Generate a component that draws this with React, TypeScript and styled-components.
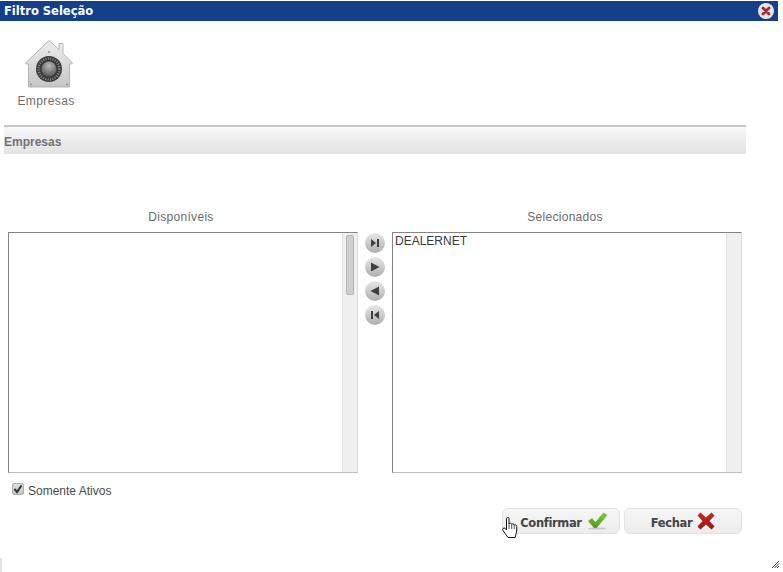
import styled, { createGlobalStyle } from "styled-components";

const GlobalStyle = createGlobalStyle`
  html, body {
    margin: 0;
    padding: 0;
    background: #fff;
    overflow: hidden;
  }
  body {
    font-family: "Liberation Sans", Arial, sans-serif;
  }
`;

const Page = styled.div`
  position: relative;
  width: 783px;
  height: 572px;
  background: #fff;
  overflow: hidden;
`;

const Dialog = styled.div`
  width: 778px;
  padding-top: 1px;
  display: flex;
  flex-direction: column;
`;

const TitleBar = styled.header`
  height: 20px;
  background: #143f8a;
  display: flex;
  align-items: center;
  justify-content: space-between;
  padding: 0 4px 0 4px;
`;

const Title = styled.h1`
  margin: 0;
  font-family: "DejaVu Sans", Verdana, sans-serif;
  font-size: 11.5px;
  font-weight: 700;
  color: #fff;
`;

const Toolbar = styled.div`
  height: 104px;
  padding-top: 19px;
  padding-left: 17px;
  box-sizing: border-box;
`;

const ToolItem = styled.div`
  width: 58px;
  display: flex;
  flex-direction: column;
  align-items: center;
  gap: 6px;
  font-size: 12px;
  letter-spacing: 0.4px;
  color: #6f6f6f;
`;

const ToolIcon = styled.svg`
  margin-left: 5px;
`;

const SectionHeader = styled.div`
  width: 742px;
  margin-left: 4px;
  height: 29px;
  box-sizing: border-box;
  padding-top: 2px;
  border-top: 2px solid #c4c4c4;
  background: linear-gradient(#f8f8f8, #e2e2e2);
  font-size: 12px;
  font-weight: 700;
  color: #727272;
  display: flex;
  align-items: center;
`;

const Picker = styled.div`
  margin-top: 56px;
  padding-left: 8px;
  display: grid;
  grid-template-columns: 350px 34px 350px;
  row-gap: 8px;
`;

const ColumnLabel = styled.div<{ $column: number }>`
  grid-column: ${({ $column }) => $column};
  grid-row: 1;
  padding-right: 4px;
  text-align: center;
  font-size: 12px;
  line-height: 14px;
  color: #6b6b6b;
  letter-spacing: 0.3px;
`;

const ListBox = styled.div<{ $column: number }>`
  grid-column: ${({ $column }) => $column};
  grid-row: 2;
  height: 241px;
  box-sizing: border-box;
  border: 1px solid #858585;
  border-right-color: #dcdcdc;
  border-bottom-color: #bcbcbc;
  display: flex;
  justify-content: space-between;
`;

const ListItems = styled.div`
  padding: 1px 2px;
  font-size: 12px;
  line-height: 14px;
  color: #3a3a3a;
`;

const ScrollTrack = styled.div`
  width: 15px;
  background: #f0f0f0;
  border-left: 1px solid #e2e2e2;
  padding: 2px 3px;
  box-sizing: border-box;
`;

const ScrollThumb = styled.div`
  height: 60px;
  box-sizing: border-box;
  background: #cfcfcf;
  border: 1px solid #b4b4b4;
  border-radius: 2px;
`;

const MoveButtons = styled.div`
  grid-column: 2;
  grid-row: 2;
  display: flex;
  flex-direction: column;
  align-items: center;
  gap: 4px;
  padding-top: 1px;
`;

const MoveButton = styled.button`
  width: 20px;
  height: 20px;
  padding: 0;
  border: 0;
  border-radius: 50%;
  background: linear-gradient(#e6e6e6, #cfcfcf 45%, #acacac);
  display: flex;
  align-items: center;
  justify-content: center;
`;

const ActiveOnly = styled.label`
  margin: 9px 0 0 12px;
  display: flex;
  align-items: flex-start;
  gap: 4px;
  font-size: 12px;
  line-height: 18px;
  color: #4a4a4a;
  height: 18px;
`;

const CheckMark = styled.span`
  width: 12px;
  height: 12px;
  margin-top: 1px;
  box-sizing: border-box;
  border: 1px solid #b0b0b0;
  border-radius: 2px;
  background: linear-gradient(#dedede, #c4c4c4);
  display: flex;
  align-items: center;
  justify-content: center;
`;

const Actions = styled.div`
  margin-top: 8px;
  width: 742px;
  display: flex;
  justify-content: flex-end;
  gap: 4px;
`;

const ActionButton = styled.button<{ $offset?: number }>`
  position: relative;
  width: 118px;
  height: 26px;
  padding: 0 0 0 ${({ $offset }) => $offset ?? 0}px;
  border: 1px solid #e2e2e2;
  border-radius: 6px;
  background: linear-gradient(#f6f6f6, #ececec);
  display: flex;
  align-items: center;
  justify-content: center;
  gap: 5px;
  font-family: "DejaVu Sans", Verdana, sans-serif;
  font-size: 11.5px;
  letter-spacing: -0.35px;
  font-weight: 700;
  color: #444;
`;

const ActionLabel = styled.span`
  padding-top: 3px;
`;

const HandCursor = styled.svg`
  position: absolute;
  left: -1px;
  top: 8px;
`;

const ResizeGrip = styled.svg`
  position: absolute;
  right: 3px;
  bottom: 3px;
`;

const LeftEdge = styled.div`
  position: absolute;
  left: 0;
  bottom: 0;
  width: 2px;
  height: 14px;
  background: #e4e4e4;
`;

const CloseIcon = () => (
  <svg width="16" height="16" viewBox="0 0 16 16">
    <circle cx="8" cy="8" r="8" fill="#e6e6ea" />
    <path d="M5 5 L11 11 M11 5 L5 11" stroke="#a5282c" strokeWidth="2.8" strokeLinecap="round" />
  </svg>
);

const VaultIcon = () => (
  <ToolIcon width="48" height="48" viewBox="0 0 48 48">
    <defs>
      <linearGradient id="house" x1="0" y1="0" x2="0" y2="1">
        <stop offset="0" stopColor="#ededed" />
        <stop offset="1" stopColor="#c6c6c6" />
      </linearGradient>
      <radialGradient id="knob" cx="0.5" cy="0.3" r="0.7">
        <stop offset="0" stopColor="#b8b8b8" />
        <stop offset="1" stopColor="#5a5a5a" />
      </radialGradient>
    </defs>
    <path
      d="M24 0.5 L34 9.5 V3.5 H38 V13.5 L47.5 23 L46.5 24 H44.5 V47 H3.5 V24 H1.5 L0.5 23 Z"
      fill="url(#house)"
      stroke="#a6a6a6"
      strokeWidth="0.8"
    />
    <circle cx="24" cy="29" r="13" fill="#3a3a3a" />
    <circle cx="24" cy="29" r="10.5" fill="none" stroke="#8c8c8c" strokeWidth="2.4" strokeDasharray="1 1.4" />
    <circle cx="24" cy="29" r="7.5" fill="url(#knob)" />
    <circle cx="24" cy="12" r="1" fill="#9a9a9a" />
    <circle cx="6" cy="44.5" r="0.9" fill="#8a8a8a" />
    <circle cx="42" cy="44.5" r="0.9" fill="#8a8a8a" />
  </ToolIcon>
);

const MoveGlyph = ({ kind }: { kind: "last" | "next" | "prev" | "first" }) => {
  const paths = {
    last: "M2 2 L7 6 L2 10 Z M8 2 H10 V10 H8 Z",
    next: "M2 1.5 L10.5 6 L2 10.5 Z",
    prev: "M10 1.5 L1.5 6 L10 10.5 Z",
    first: "M10 2 L5 6 L10 10 Z M2 2 H4 V10 H2 Z",
  };
  return (
    <svg width="12" height="12" viewBox="0 0 12 12">
      <path d={paths[kind]} fill="#3f3f3f" />
    </svg>
  );
};

const CheckIcon = () => (
  <svg width="21" height="18" viewBox="0 0 21 18">
    <defs>
      <linearGradient id="tick" x1="0" y1="0" x2="0" y2="1">
        <stop offset="0" stopColor="#8cc63f" />
        <stop offset="1" stopColor="#4f9a1e" />
      </linearGradient>
    </defs>
    <ellipse cx="10" cy="16.5" rx="9" ry="1" fill="#c8c8c8" />
    <path d="M1 9 L5 6 L8.5 10 L16.5 0.5 L20.5 3 L9.5 16 H7 Z" fill="url(#tick)" />
  </svg>
);

const CrossIcon = () => (
  <svg width="18" height="18" viewBox="0 0 18 18">
    <defs>
      <linearGradient id="cross" x1="0" y1="0" x2="0" y2="1">
        <stop offset="0" stopColor="#c22a22" />
        <stop offset="1" stopColor="#931a16" />
      </linearGradient>
    </defs>
    <path
      d="M0.5 3.5 L3.5 0.5 L9 5.5 L14.5 0.5 L17.5 3.5 L12.5 9 L17.5 14.5 L14.5 17.5 L9 12.5 L3.5 17.5 L0.5 14.5 L5.5 9 Z"
      fill="url(#cross)"
    />
  </svg>
);

const Hand = () => (
  <HandCursor width="16" height="21" viewBox="0 0 16 21">
    <path
      d="M4.5 1.5 C4.5 0.2 7 0.2 7 1.5 V7 C7.5 5.8 9.5 5.8 9.7 7.5 C10.2 6.5 12 6.5 12.2 8.2 C12.8 7.5 14.7 7.7 14.7 9.5 V14 L13.2 20.5 H6 L1 13.5 C0 11.8 1.8 10.3 3 11.3 L4.5 13 Z"
      fill="#fff"
      stroke="#111"
      strokeWidth="1"
    />
    <path d="M7 7 V12 M9.7 7.5 V12 M12.2 8.2 V12" stroke="#111" strokeWidth="0.7" />
  </HandCursor>
);

export default function App() {
  return (
    <Page>
      <GlobalStyle />
      <Dialog>
        <TitleBar>
          <Title>Filtro Seleção</Title>
          <CloseIcon />
        </TitleBar>
        <Toolbar>
          <ToolItem>
            <VaultIcon />
            Empresas
          </ToolItem>
        </Toolbar>
        <SectionHeader>Empresas</SectionHeader>
        <Picker>
          <ColumnLabel $column={1}>Disponíveis</ColumnLabel>
          <ColumnLabel $column={3}>Selecionados</ColumnLabel>
          <ListBox $column={1}>
            <ListItems />
            <ScrollTrack>
              <ScrollThumb />
            </ScrollTrack>
          </ListBox>
          <MoveButtons>
            <MoveButton><MoveGlyph kind="last" /></MoveButton>
            <MoveButton><MoveGlyph kind="next" /></MoveButton>
            <MoveButton><MoveGlyph kind="prev" /></MoveButton>
            <MoveButton><MoveGlyph kind="first" /></MoveButton>
          </MoveButtons>
          <ListBox $column={3}>
            <ListItems>DEALERNET</ListItems>
            <ScrollTrack />
          </ListBox>
        </Picker>
        <ActiveOnly>
          <CheckMark>
            <svg width="10" height="10" viewBox="0 0 10 10">
              <path d="M1.5 5 L4 8 L8.5 1.5" fill="none" stroke="#333" strokeWidth="2" />
            </svg>
          </CheckMark>
          Somente Ativos
        </ActiveOnly>
        <Actions>
          <ActionButton $offset={6}>
            <Hand />
            <ActionLabel>Confirmar</ActionLabel>
            <CheckIcon />
          </ActionButton>
          <ActionButton>
            <ActionLabel>Fechar</ActionLabel>
            <CrossIcon />
          </ActionButton>
        </Actions>
      </Dialog>
      <LeftEdge />
      <ResizeGrip width="9" height="9" viewBox="0 0 9 9">
        <path d="M8 1 L1 8 M8 3.5 L3.5 8 M8 6 L6 8" stroke="#444" strokeWidth="1" />
      </ResizeGrip>
    </Page>
  );
}
